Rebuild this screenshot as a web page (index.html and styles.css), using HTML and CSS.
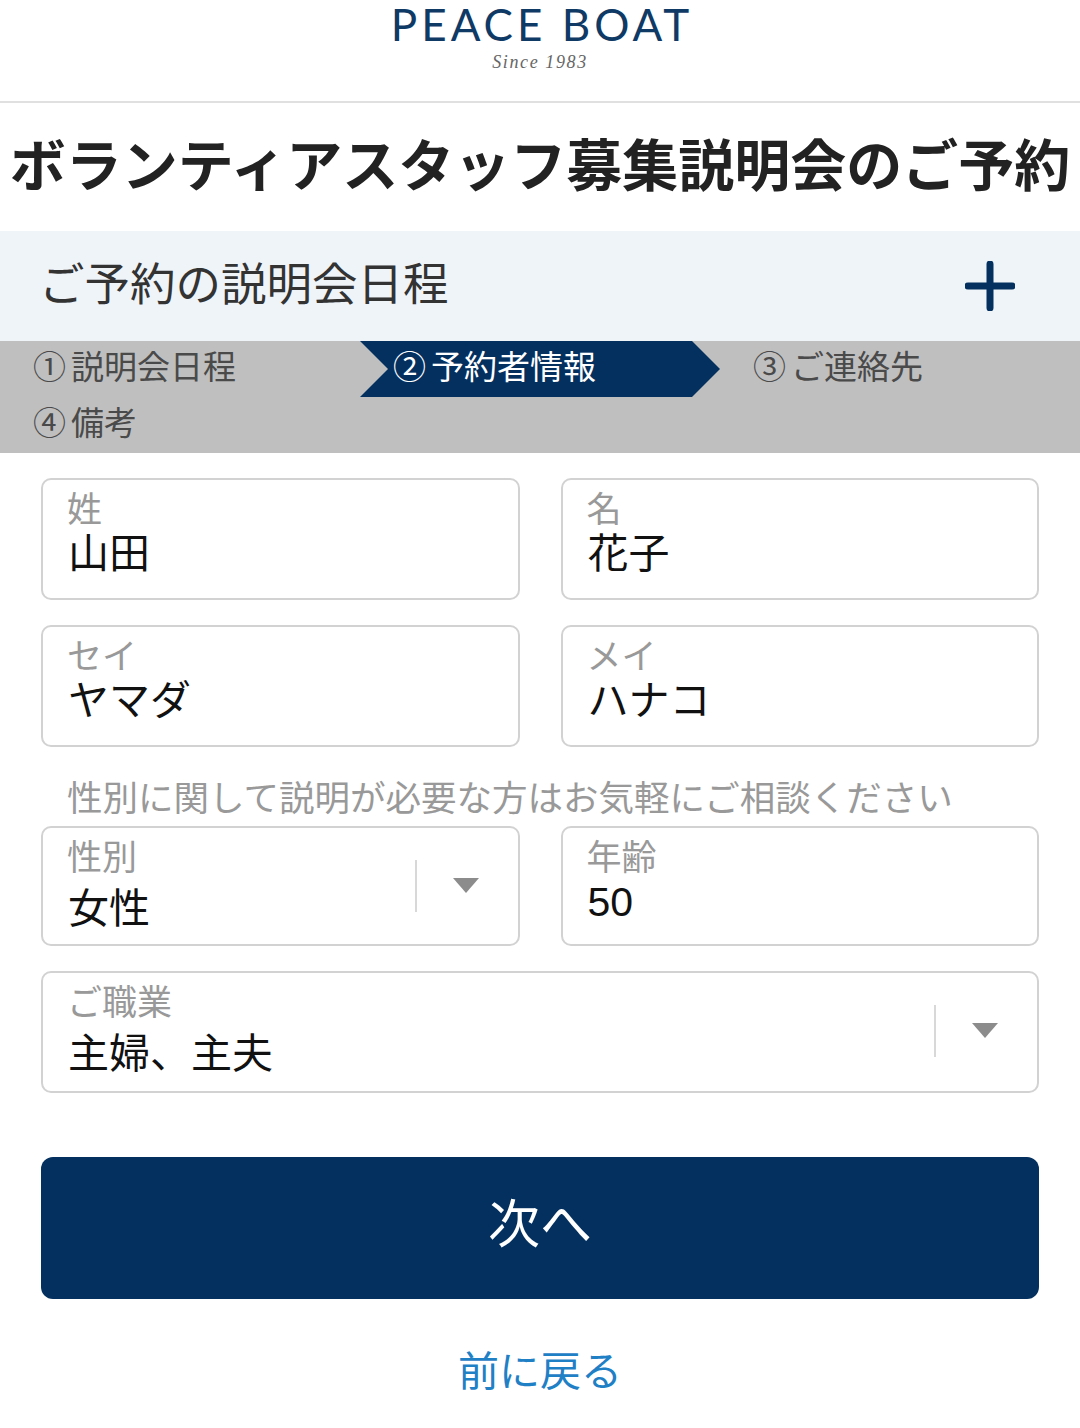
FILE: index.html
```html
<!DOCTYPE html>
<html lang="ja">
<head>
<meta charset="utf-8">
<title>ボランティアスタッフ募集説明会のご予約</title>
<link rel="stylesheet" href="styles.css">
</head>
<body>
<header class="site-header">
  <div class="logo">PEACE BOAT</div>
  <div class="since">Since 1983</div>
</header>
<h1 class="title">ボランティアスタッフ募集説明会のご予約</h1>
<section class="accordion">
  <span class="accordion-label">ご予約の説明会日程</span>
  <svg class="plus" width="50" height="50" viewBox="0 0 50 50" aria-hidden="true"><path d="M25 3V47M3 25H47" stroke="#03305f" stroke-width="7" stroke-linecap="round"/></svg>
</section>
<ol class="steps">
  <li class="step"><span class="num">①</span>説明会日程</li>
  <li class="step current"><span class="num">②</span>予約者情報</li>
  <li class="step"><span class="num">③</span>ご連絡先</li>
  <li class="step"><span class="num">④</span>備考</li>
</ol>
<form class="form">
  <div class="row">
    <div class="field"><div class="label">姓</div><div class="value">山田</div></div>
    <div class="field"><div class="label">名</div><div class="value">花子</div></div>
  </div>
  <div class="row">
    <div class="field"><div class="label">セイ</div><div class="value">ヤマダ</div></div>
    <div class="field"><div class="label">メイ</div><div class="value">ハナコ</div></div>
  </div>
  <p class="note">性別に関して説明が必要な方はお気軽にご相談ください</p>
  <div class="row">
    <div class="field short select"><div class="label">性別</div><div class="value">女性</div><span class="caret"></span></div>
    <div class="field short"><div class="label">年齢</div><div class="value">50</div></div>
  </div>
  <div class="row">
    <div class="field select"><div class="label">ご職業</div><div class="value">主婦、主夫</div><span class="caret"></span></div>
  </div>
  <button class="next" type="button">次へ</button>
  <a class="back" href="#">前に戻る</a>
</form>
</body>
</html>
```
FILE: styles.css
```css
* { box-sizing: border-box; }
html, body { margin: 0; padding: 0; }
body {
  width: 1080px;
  height: 1428px;
  overflow: hidden;
  background: #fff;
  color: #111;
  font-family: "Noto Sans CJK JP", "Noto Sans", sans-serif;
}
.site-header {
  height: 103px;
  border-bottom: 2px solid #e0e0e0;
  display: flex;
  flex-direction: column;
  align-items: center;
}
.logo {
  font-family: Lato, sans-serif;
  font-size: 44px;
  line-height: 48px;
  letter-spacing: 4px;
  margin-right: -4px;
  color: #0f3a66;
}
.since {
  margin-top: 2px;
  font-family: "Liberation Serif", serif;
  font-style: italic;
  font-size: 18px;
  line-height: 24px;
  letter-spacing: 1.6px;
  color: #666;
}
.title {
  margin: 0;
  height: 128px;
  font-size: 56px;
  font-weight: 700;
  line-height: 118px;
  text-align: center;
  white-space: nowrap;
  color: #222;
}
.accordion {
  height: 110px;
  padding: 0 65px 0 39px;
  background: #eff4f9;
  display: flex;
  align-items: center;
  justify-content: space-between;
}
.accordion-label { font-size: 45.5px; line-height: 60px; padding-bottom: 10px; color: #333; }
.steps {
  margin: 0;
  padding: 0;
  list-style: none;
  height: 112px;
  background: #bfbfbf;
  display: grid;
  grid-template-columns: repeat(3, 360px);
  grid-auto-rows: 56px;
}
.step {
  padding-left: 33px;
  font-size: 33px;
  line-height: 48px;
  color: #4a4a4a;
  white-space: nowrap;
}
.num { display: inline-block; width: 38px; }
.step.current {
  background: #03305f;
  color: #fff;
  clip-path: polygon(0 0, 332px 0, 100% 50%, 332px 100%, 0 100%, 28px 50%);
}
.form { padding: 25px 41px 0; }
.row {
  display: flex;
  gap: 41px;
  margin-bottom: 25px;
}
.field {
  position: relative;
  flex: 1;
  height: 122px;
  padding: 5px 25px 0;
  border: 2px solid #d2d2d2;
  border-radius: 10px;
  background: #fff;
}
.field.short { height: 120px; }
.label { margin-left: -1px; font-size: 35px; line-height: 44px; color: #999; }
.value {
  margin-top: 2px;
  font-family: "Liberation Sans", "Noto Sans CJK JP", sans-serif;
  font-size: 41px;
  line-height: 46px;
  color: #111;
}
.select .value { margin-top: 9px; }
.select .caret {
  position: absolute;
  top: 6px;
  bottom: 6px;
  right: 0;
  width: 103px;
}
.caret::before {
  content: "";
  position: absolute;
  left: 0;
  top: 26px;
  height: 52px;
  border-left: 2px solid #d8d8d8;
}
.caret::after {
  content: "";
  position: absolute;
  left: 38px;
  top: 44px;
  border-style: solid;
  border-width: 15px 13px 0;
  border-color: #8c8c8c transparent transparent;
}
.note {
  margin: -2px 0 0;
  padding-left: 26px;
  height: 56px;
  font-size: 35.5px;
  line-height: 52px;
  color: #999;
  white-space: nowrap;
}
.next {
  display: block;
  width: 100%;
  height: 142px;
  margin-top: 64px;
  padding: 0 0 16px;
  border: 0;
  border-radius: 12px;
  background: #03305f;
  color: #fff;
  font: 400 52px "Noto Sans CJK JP", sans-serif;
}
.back {
  display: block;
  margin-top: 42px;
  text-align: center;
  font-size: 41px;
  line-height: 54px;
  color: #1f80c6;
  text-decoration: none;
}
```
